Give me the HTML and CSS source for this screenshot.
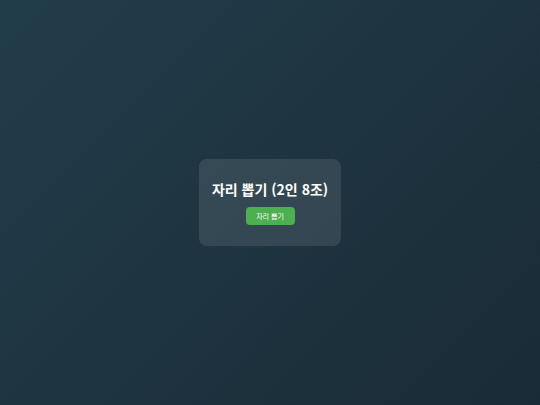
FILE: index.html
```html
<!DOCTYPE html>
<html lang="ko">
<head>
<meta charset="utf-8">
<link rel="stylesheet" href="styles.css">
</head>
<body>
<div class="card">
  <h1 class="title">자리 뽑기 (2인 8조)</h1>
  <button class="btn">자리 뽑기</button>
</div>
</body>
</html>
```
FILE: styles.css
```css
html, body {
  margin: 0;
  padding: 0;
  height: 100%;
}
body {
  background: linear-gradient(135deg, #223d4a 0%, #1e3440 50%, #192b36 100%);
  display: flex;
  align-items: center;
  justify-content: center;
  font-family: "Noto Sans CJK KR", "Noto Sans", sans-serif;
}
.card {
  background: rgba(255, 255, 255, 0.1);
  border-radius: 8px;
  padding: 20px 13px 21px;
  display: flex;
  flex-direction: column;
  align-items: center;
  gap: 8px;
}
.title {
  margin: 0;
  color: #ffffff;
  font-size: 14px;
  font-weight: 700;
  line-height: 20px;
}
.btn {
  background: #4caf50;
  color: #ffffff;
  border: none;
  border-radius: 4px;
  font-family: inherit;
  font-size: 7px;
  padding: 0;
  height: 18px;
  width: 49px;
}
```
